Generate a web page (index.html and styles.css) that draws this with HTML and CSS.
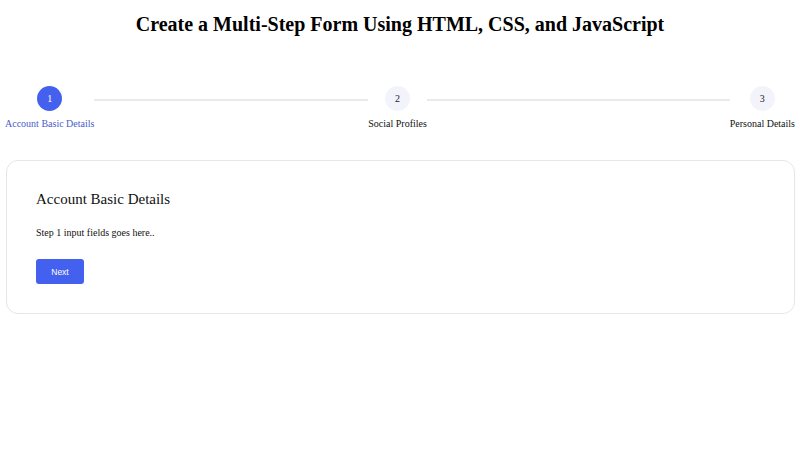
FILE: index.html
```html
<!DOCTYPE html>
<html lang="en">
<head>
<meta charset="utf-8">
<title>Multi-Step Form</title>
<link rel="stylesheet" href="styles.css">
</head>
<body>
<div class="page">
  <h1 class="title">Create a Multi-Step Form Using HTML, CSS, and JavaScript</h1>
  <div class="stepper">
    <div class="step active">
      <div class="circle">1</div>
      <div class="label">Account Basic Details</div>
    </div>
    <div class="line line-first"></div>
    <div class="step">
      <div class="circle">2</div>
      <div class="label">Social Profiles</div>
    </div>
    <div class="line line-second"></div>
    <div class="step">
      <div class="circle">3</div>
      <div class="label">Personal Details</div>
    </div>
  </div>
  <div class="card">
    <h2 class="card-title">Account Basic Details</h2>
    <p class="card-text">Step 1 input fields goes here..</p>
    <button class="btn" type="button">Next</button>
  </div>
</div>
</body>
</html>
```

FILE: styles.css
```css
html, body {
  margin: 0;
  padding: 0;
  background: #ffffff;
}
body {
  font-family: "Liberation Serif", "Times New Roman", serif;
  color: #111111;
}
.page {
  padding: 0 5px;
}
.title {
  margin: 0;
  padding-top: 10px;
  font-size: 20px;
  line-height: 28px;
  font-weight: bold;
  text-align: center;
  color: #000;
}
.stepper {
  display: flex;
  align-items: flex-start;
  margin-top: 48px;
}
.step {
  display: flex;
  flex-direction: column;
  align-items: center;
}
.circle {
  width: 25px;
  height: 25px;
  border-radius: 50%;
  background: #f3f3fb;
  color: #222;
  font-size: 10px;
  display: flex;
  align-items: center;
  justify-content: center;
}
.step.active .circle {
  background: #4361ee;
  color: #ffffff;
}
.label {
  margin-top: 6px;
  font-size: 10px;
  line-height: 14px;
  color: #111;
  white-space: nowrap;
}
.step.active .label {
  color: #4a5ccc;
}
.line {
  height: 2px;
  background: #e9e9ee;
  margin-top: 13px;
}
.line-first {
  flex: 274 1 0;
}
.line-second {
  flex: 303 1 0;
}
.card {
  margin-top: 29px;
  margin-left: 1px;
  border: 1px solid #e6e6ea;
  border-radius: 12px;
  padding: 29px;
}
.card-title {
  margin: 0;
  font-size: 15px;
  line-height: 18px;
  font-weight: normal;
  color: #111;
}
.card-text {
  margin: 18px 0 0;
  font-size: 10px;
  line-height: 14px;
}
.btn {
  display: block;
  margin-top: 19px;
  width: 48px;
  height: 25px;
  border: none;
  border-radius: 3px;
  background: #4361ee;
  color: #ffffff;
  font-family: "Liberation Sans", Arial, sans-serif;
  font-size: 8.5px;
  padding: 0;
}
```
